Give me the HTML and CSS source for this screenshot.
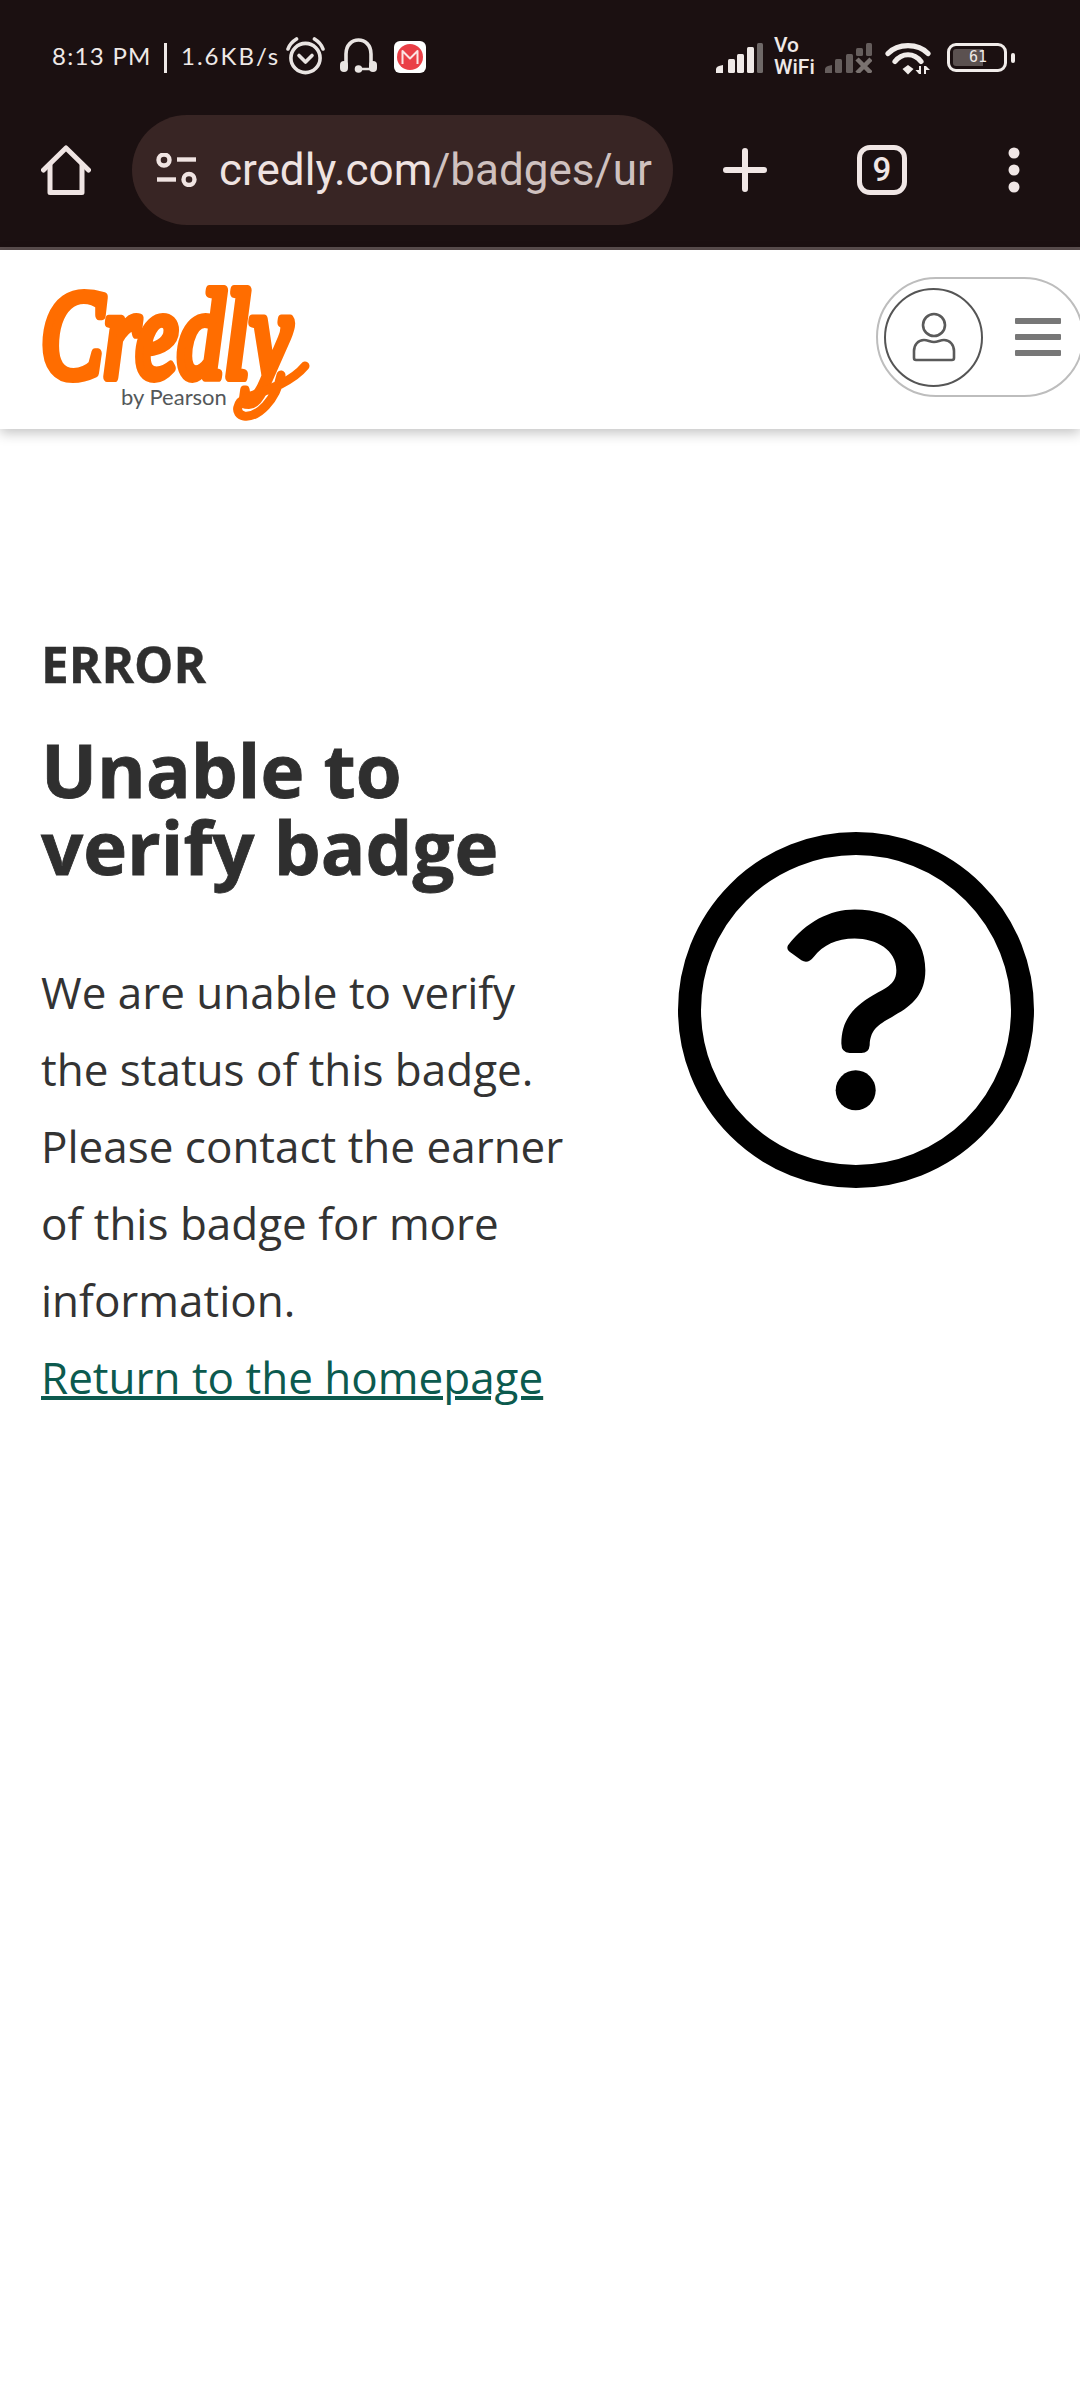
FILE: index.html
```html
<!DOCTYPE html>
<html lang="en">
<head>
<meta charset="utf-8">
<title>Credly</title>
<link rel="stylesheet" href="styles.css">
</head>
<body>
<div class="chrome">
  <div class="status">
    <div class="status-left">
      <span class="time">8:13 PM</span>
      <span class="sep"></span>
      <span class="speed">1.6KB/s</span>
      <svg class="ic-alarm" viewBox="0 0 39 38" width="39" height="38" fill="none" stroke="#e9e4e2" stroke-width="3.6" stroke-linecap="round" stroke-linejoin="round">
        <circle cx="19.5" cy="21" r="14.6"/>
        <path d="M2 12 Q4 6 10.5 2"/><path d="M37 12 Q35 6 28.5 2"/>
        <path d="M13 18.5 L19.5 25 L26 18.5"/>
      </svg>
      <svg class="ic-head" viewBox="0 0 39 36" width="39" height="36" fill="none" stroke="#e9e4e2" stroke-width="3.6" stroke-linecap="round">
        <path d="M7 26 V16 C7 7 13 2 19.5 2 C26 2 32 7 32 16 V26"/>
        <rect x="1" y="23" width="8" height="11" rx="4" fill="#e9e4e2" stroke="none"/>
        <rect x="30" y="23" width="8" height="11" rx="4" fill="#e9e4e2" stroke="none"/>
        <circle cx="19.5" cy="31" r="3.8" fill="#e9e4e2" stroke="none"/>
        <path d="M19.5 31 H32" stroke-width="2.6"/>
      </svg>
      <svg class="ic-mail" viewBox="0 0 32 32" width="32" height="32">
        <rect width="32" height="32" rx="6" fill="#fff"/>
        <circle cx="16" cy="16" r="13" fill="#ea3f47"/>
        <path d="M8.5 23 V10 L16 17.5 L23.5 10 V23" fill="none" stroke="#fbe3e3" stroke-width="2" stroke-linejoin="round"/>
      </svg>
    </div>
    <div class="status-right">
      <svg class="ic-signal" viewBox="0 0 47 30" width="47" height="30">
        <path d="M0 30 V26 Q0 23 7 22 V30 Z" fill="#efe9e7"/>
        <rect x="12" y="16" width="7" height="14" rx="1.5" fill="#efe9e7"/>
        <rect x="21" y="11" width="7" height="19" rx="1.5" fill="#efe9e7"/>
        <rect x="31" y="4" width="7" height="26" rx="1.5" fill="#efe9e7"/>
        <rect x="41" y="0" width="6" height="30" rx="1.5" fill="#6f6968"/>
      </svg>
      <div class="vowifi"><span>Vo</span><span>WiFi</span></div>
      <svg class="ic-signal2" viewBox="0 0 47 30" width="47" height="30" fill="#655d5c">
        <path d="M0 30 V26 Q0 23 7 22 V30 Z"/>
        <rect x="10" y="16" width="7" height="14" rx="1.5"/>
        <rect x="21" y="11" width="7" height="19" rx="1.5"/>
        <rect x="31" y="5" width="7" height="8" rx="1.5"/>
        <rect x="41" y="0" width="6" height="13" rx="1.5"/>
        <path d="M32 16 L46 30 M46 16 L32 30" stroke="#7a7270" stroke-width="4.5"/>
      </svg>
      <svg class="ic-wifi" viewBox="0 0 46 32" width="46" height="32" fill="none" stroke="#f1ecea" stroke-width="5.2" stroke-linecap="round">
        <path d="M3 10.5 C13 0 33 0 43 10.5"/>
        <path d="M10 18.5 C17 9.5 29 9.5 36 18.5"/>
        <path d="M17.5 26 L23 22 L28.5 26 L23 31.5 Z" fill="#f1ecea" stroke="none"/>
        <path d="M36 23 V31 H34 L30.5 27 H34 V23 Z" fill="#f1ecea" stroke="none"/>
        <path d="M39 31 V23 H41 L45 27 H41 V31 Z" fill="#f1ecea" stroke="none"/>
      </svg>
      <div class="battery">
        <div class="battery-body"><span class="battery-fill"></span><span class="battery-num">61</span></div>
        <span class="battery-nub"></span>
      </div>
    </div>
  </div>
  <div class="toolbar">
    <svg class="ic-home" viewBox="0 0 50 50" width="50" height="50" fill="none" stroke="#efe4e3" stroke-width="5" stroke-linejoin="round" stroke-linecap="round">
      <path d="M2.5 25 L25 3 L47.5 25"/>
      <path d="M9 20 V47.5 H41 V20"/>
    </svg>
    <div class="omnibox">
      <svg class="ic-tune" viewBox="0 0 41 34" width="41" height="34" fill="none" stroke="#f0e4e2" stroke-width="4.4">
        <circle cx="8" cy="7" r="5.5"/>
        <path d="M21 6.5 H40"/>
        <path d="M1 26.5 H20"/>
        <circle cx="33" cy="26.5" r="5.5"/>
      </svg>
      <div class="url"><span class="domain">credly.com</span><span class="path">/badges/ur</span></div>
    </div>
    <svg class="ic-plus" viewBox="0 0 44 44" width="44" height="44" stroke="#f0e6e5" stroke-width="6" stroke-linecap="round">
      <path d="M22 3 V41 M3 22 H41"/>
    </svg>
    <div class="tabs">9</div>
    <svg class="ic-dots" viewBox="0 0 12 46" width="12" height="46" fill="#f0e6e5">
      <circle cx="6" cy="6" r="5.5"/><circle cx="6" cy="23" r="5.5"/><circle cx="6" cy="40" r="5.5"/>
    </svg>
  </div>
</div>

<header class="site-header">
  <svg class="logo" viewBox="0 0 280 179" width="280" height="179" role="img" aria-label="Credly by Pearson">
    <text class="logo-word" transform="translate(5 127) scale(.74 1)">Credly</text>
    <path class="logo-swash" d="M245 125 C240 150 222 168 208 166 C198 164 200 152 212 147 C232 140 256 132 269 116"/>
    <text class="logo-by" x="85" y="155">by Pearson</text>
  </svg>
  <div class="account">
    <div class="avatar">
      <svg viewBox="0 0 44 50" width="44" height="50" fill="none" stroke="#5a5a5a" stroke-width="2.6" stroke-linejoin="round">
        <circle cx="22" cy="13" r="11"/>
        <path d="M12 28 C16 28 18 30 22 30 C26 30 28 28 32 28 C38 28 42 33 42 39 V46 Q42 48 40 48 H4 Q2 48 2 46 V39 C2 33 6 28 12 28 Z"/>
      </svg>
    </div>
    <div class="burger"><span></span><span></span><span></span></div>
  </div>
</header>

<main class="content">
  <section class="message">
    <p class="eyebrow">ERROR</p>
    <h1 class="title">Unable to verify badge</h1>
    <p class="body">We are unable to verify the status of this badge. Please contact the earner of this badge for more information.</p>
    <a class="home-link" href="#">Return to the homepage</a>
  </section>
  <svg class="unknown" viewBox="0 0 356 356" width="356" height="356">
    <circle cx="178" cy="178" r="166.5" fill="none" stroke="#000" stroke-width="23"/>
    <g transform="translate(-18.3 -21.7) scale(.3333)">
      <path d="M385 405 C440 335 510 298 585 298 C710 298 797 370 797 480 C797 550 760 585 705 615 C665 640 632 650 630 705 Q628 728 605 728 L570 728 Q545 728 545 700 C545 630 580 590 640 555 C685 530 710 520 710 480 C710 420 650 385 585 385 C530 385 490 405 462 440 Q445 462 425 450 L395 428 Q378 418 385 405 Z"/>
      <circle cx="588" cy="840" r="60"/>
    </g>
  </svg>
</main>
</body>
</html>
```

FILE: styles.css
```css
* { box-sizing: border-box; }
html, body { margin: 0; padding: 0; background: #fff; }
body { width: 1080px; height: 2400px; overflow: hidden; font-family: "Open Sans", sans-serif; }

.chrome { height: 250px; background: #1b1011; border-bottom: 3px solid #5a4e4e; }

.status { height: 115px; display: flex; justify-content: space-between; padding: 34px 65px 0 52px; }
.status-left, .status-right { display: flex; align-items: flex-start; height: 48px; }
.time, .speed { margin-top: 2px; font-family: "Lato", sans-serif; font-size: 24px; line-height: 40px; color: #efe9e7; white-space: nowrap; }
.time { width: 99px; letter-spacing: 1.3px; }
.speed { width: 97px; letter-spacing: 2px; }
.sep { width: 3px; height: 30px; margin: 9px 14px 0 13px; background: #efe9e7; }
.ic-alarm { margin: 3px 0 0 8px; }
.ic-head { margin: 4px 0 0 14px; }
.ic-mail { margin: 7px 0 0 16px; }

.ic-signal { margin-top: 9px; }
.vowifi { display: flex; flex-direction: column; width: 40px; margin-left: 11px; font-family: "Roboto", sans-serif; font-weight: 500; color: #efe9e7; }
.vowifi span { font-size: 21px; line-height: 22px; white-space: nowrap; }
.ic-signal2 { margin: 9px 0 0 11px; }
.ic-wifi { margin: 9px 0 0 13px; }
.battery { display: flex; align-items: center; margin: 9px 0 0 16px; }
.battery-body { position: relative; width: 60px; height: 29px; border: 3px solid #f1ecea; border-radius: 9px; }
.battery-fill { position: absolute; left: 3px; top: 3px; bottom: 3px; width: 30px; background: #5b5150; border-radius: 3px 0 0 3px; }
.battery-num { position: absolute; left: 19px; top: 1px; font-family: "DejaVu Sans Mono", monospace; font-size: 15px; line-height: 20px; color: #efe9e7; }
.battery-nub { width: 4px; height: 10px; margin-left: 4px; background: #f1ecea; border-radius: 2px; }

.toolbar { height: 132px; display: flex; align-items: center; padding: 0 0 22px 41px; }
.omnibox { display: flex; align-items: center; width: 541px; height: 110px; margin-left: 41px; padding-left: 24px; background: #382524; border-radius: 55px; }
.url { margin-left: 22px; font-family: "Roboto", sans-serif; font-size: 44px; line-height: 60px; white-space: nowrap; }
.domain { color: #efe3e1; }
.path { color: #cfc1bf; }
.ic-plus { margin-left: 50px; }
.tabs { width: 50px; height: 50px; margin-left: 90px; border: 5.5px solid #f0e6e5; border-radius: 13px; color: #f0e6e5; font-family: "Roboto", sans-serif; font-weight: 500; font-size: 33px; line-height: 39px; text-align: center; }
.ic-dots { margin-left: 101px; }

.site-header { height: 179px; display: flex; justify-content: space-between; align-items: flex-start; background: #fff; box-shadow: 0 4px 12px rgba(0,0,0,.24); }
.logo { margin-left: 36px; }
.logo-word { font-family: "Liberation Serif", serif; font-style: italic; font-size: 126px; fill: #ff6d00; stroke: #ff6d00; stroke-width: 9px; stroke-linejoin: round; vector-effect: non-scaling-stroke; }
.logo-swash { fill: none; stroke: #ff6d00; stroke-width: 9px; stroke-linecap: round; }
.logo-by { font-family: "Lato", sans-serif; font-size: 22px; fill: #54585a; }

.account { display: flex; align-items: center; width: 208px; height: 120px; margin-top: 27px; margin-right: -4px; padding-left: 6px; border: 2px solid #bdbdbd; border-radius: 60px; background: #fff; }
.avatar { display: flex; align-items: center; justify-content: center; width: 99px; height: 99px; border: 2px solid #555; border-radius: 50%; }
.burger { display: flex; flex-direction: column; gap: 10px; margin-left: 32px; }
.burger span { display: block; width: 46px; height: 6px; background: #777; border-radius: 1px; }

.content { display: flex; justify-content: space-between; align-items: flex-start; padding: 206px 46px 0 41px; color: #2f2f2f; }
.message { width: 530px; }
.eyebrow { margin: 0 0 38px; font-size: 49.5px; line-height: 58px; font-weight: 700; -webkit-text-stroke: .4px #2f2f2f; }
.title { margin: 0 0 69px; font-size: 74.25px; line-height: 77px; font-weight: 700; -webkit-text-stroke: .8px #2f2f2f; }
.body { margin: 0; font-size: 44px; line-height: 77px; font-weight: 400; color: #333; }
.home-link { display: block; font-size: 44px; line-height: 77px; color: #0c5a4e; text-decoration: underline; text-decoration-thickness: 3.5px; white-space: nowrap; }
.unknown { margin-top: 197px; flex: none; }
```
